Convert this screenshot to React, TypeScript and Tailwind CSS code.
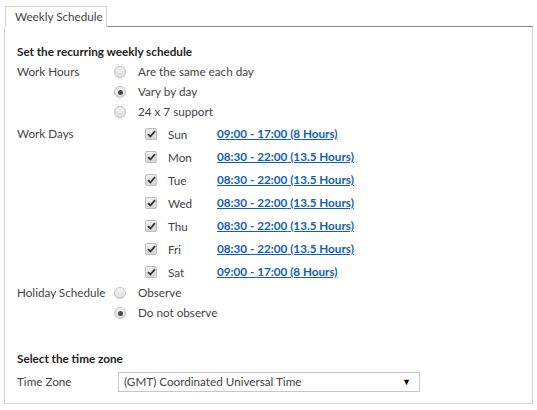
import React from "react";

const font = { fontFamily: 'Lato, "Noto Sans", sans-serif' };

const Radio = ({ checked }: { checked?: boolean }) => (
  <span className="flex h-[12px] w-[12px] items-center justify-center rounded-full border border-[#c2c2c2] bg-gradient-to-b from-[#f4f4f4] to-[#dcdcdc]">
    {checked && <span className="h-[5px] w-[5px] rounded-full bg-[#4a4a4a]" />}
  </span>
);

const Check = () => (
  <span className="flex h-[12px] w-[12px] items-center justify-center rounded-[2px] border border-[#bdbdbd] bg-gradient-to-b from-[#f2f2f2] to-[#d6d6d6]">
    <svg width="9" height="8" viewBox="0 0 9 8">
      <path d="M1 4.2 L3.4 6.5 L8 1.2" fill="none" stroke="#333" strokeWidth="1.8" />
    </svg>
  </span>
);

const days = [
  ["Sun", "09:00 - 17:00", "(8 Hours)"],
  ["Mon", "08:30 - 22:00", "(13.5 Hours)"],
  ["Tue", "08:30 - 22:00", "(13.5 Hours)"],
  ["Wed", "08:30 - 22:00", "(13.5 Hours)"],
  ["Thu", "08:30 - 22:00", "(13.5 Hours)"],
  ["Fri", "08:30 - 22:00", "(13.5 Hours)"],
  ["Sat", "09:00 - 17:00", "(8 Hours)"],
];

export default function App() {
  return (
    <div className="h-[410px] w-[537px] bg-white text-[11.7px] text-[#444]" style={font}>
      <div className="ml-[4px] w-[529px] pt-[6px]">
        <div className="flex items-end">
          <div className="ml-[1px] flex h-[21px] w-[102px] items-center whitespace-nowrap border-l border-r border-t border-[#d4d4d4] pl-[9px]">
            Weekly Schedule
          </div>
          <div className="flex-1 border-b border-[#8c8c98]" />
        </div>
        <div className="h-[377px] border-b border-l border-r border-[#d6d6d6] px-[12px] pt-[15px]">
          <div className="flex h-[20px] items-center font-bold text-[#222]">Set the recurring weekly schedule</div>
          <div className="flex">
            <div className="flex h-[20px] w-[97px] items-center">Work Hours</div>
            <div className="flex flex-col">
              {["Are the same each day", "Vary by day", "24 x 7 support"].map((t, i) => (
                <div key={t} className="flex h-[20px] items-center">
                  <Radio checked={i === 1} />
                  <span className="ml-[12px]">{t}</span>
                </div>
              ))}
            </div>
          </div>
          <div className="flex">
            <div className="flex h-[23px] w-[128px] items-center">Work Days</div>
            <div className="flex flex-col">
              {days.map(([d, h, n]) => (
                <div key={d} className="flex h-[23px] items-center">
                  <Check />
                  <span className="ml-[11px] w-[49px] pt-[2px]">{d}</span>
                  <a className="font-bold text-[#1160b7] underline">
                    {h} {n}
                  </a>
                </div>
              ))}
            </div>
          </div>
          <div className="flex">
            <div className="flex h-[20px] w-[97px] items-center whitespace-nowrap">Holiday Schedule</div>
            <div className="flex flex-col">
              {["Observe", "Do not observe"].map((t, i) => (
                <div key={t} className="flex h-[20px] items-center">
                  <Radio checked={i === 1} />
                  <span className="ml-[12px]">{t}</span>
                </div>
              ))}
            </div>
          </div>
          <div className="mt-[27px] flex h-[18px] items-center font-bold text-[#222]">Select the time zone</div>
          <div className="mt-[4px] flex items-center">
            <div className="w-[101px]">Time Zone</div>
            <div className="flex h-[20px] w-[302px] items-center justify-between border border-[#c8c8c8] pl-[5px] pr-[8px]">
              <span>(GMT) Coordinated Universal Time</span>
              <span className="text-[9px] text-black">▼</span>
            </div>
          </div>
        </div>
      </div>
    </div>
  );
}
